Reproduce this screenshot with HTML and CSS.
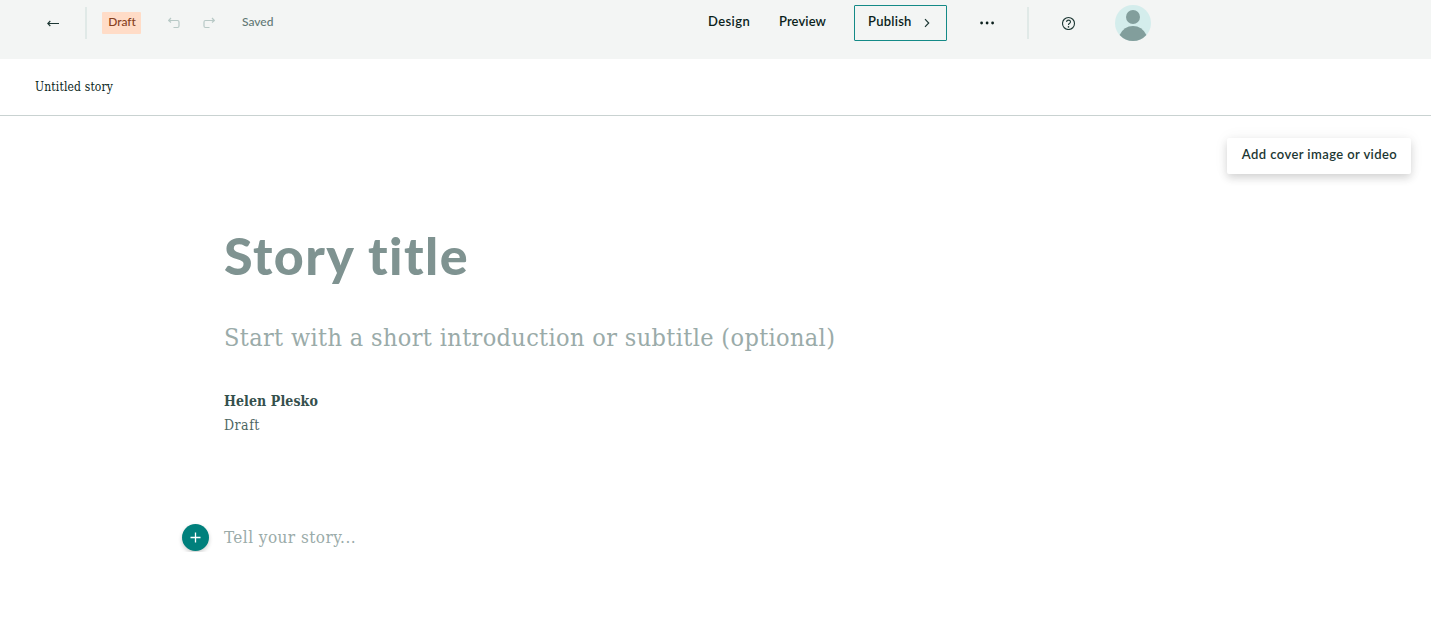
FILE: index.html
```html
<!DOCTYPE html>
<html lang="en">
<head>
<meta charset="utf-8">
<title>Untitled story</title>
<link rel="stylesheet" href="styles.css">
</head>
<body>
<header class="toolbar">
  <div class="toolbar-left">
    <svg class="icon back" width="12" height="8" viewBox="0 0 12 8"><path d="M.8 4.500H12M3.300 2 .8 4.500l2.500 2.500" fill="none" stroke="#1c3733" stroke-width="1.1"/></svg>
    <span class="divider"></span>
    <span class="badge">Draft</span>
    <svg class="icon undo" width="12" height="12" viewBox="0 0 12 12"><path d="M1 3.500h8.500q1.500 0 1.500 1.500v4q0 1.500-1.500 1.500H5.500M3 1 .7 3.500 3 5.500" fill="none" stroke="#b8c9c6" stroke-width="1.2"/></svg>
    <svg class="icon redo" width="12" height="12" viewBox="0 0 12 12"><path d="M11 3.500H2.500Q1 3.500 1 5v4q0 1.500 1.500 1.500h4M9 1l2.300 2.500L9 5.500" fill="none" stroke="#b8c9c6" stroke-width="1.2"/></svg>
    <span class="status">Saved</span>
  </div>
  <nav class="toolbar-right">
    <a class="link design">Design</a>
    <a class="link preview">Preview</a>
    <button class="publish"><span class="publish-label">Publish</span><svg class="icon" width="6" height="10" viewBox="0 0 6 10"><path d="m1 1.200 3.700 3.800L1 8.800" fill="none" stroke="#1c3733" stroke-width="1.2"/></svg></button>
    <svg class="icon more" width="14" height="4" viewBox="0 0 14 4"><g fill="#0b1f1c"><circle cx="1.600" cy="2" r="1.400"/><circle cx="7.100" cy="2" r="1.400"/><circle cx="12.600" cy="2" r="1.400"/></g></svg>
    <span class="divider"></span>
    <svg class="icon help" width="14" height="14" viewBox="0 0 14 14"><g fill="none" stroke="#1c3733" stroke-width="1.1"><circle cx="6.500" cy="7.500" r="6"/><path d="M4.600 6Q4.600 4.100 6.500 4.100T8.500 5.800Q8.500 6.800 7.300 7.500 6.500 8 6.500 9"/></g><circle cx="6.500" cy="10.900" r=".8" fill="#1c3733"/></svg>
    <svg class="icon avatar" width="36" height="36" viewBox="0 0 36 36"><circle cx="18" cy="18" r="18" fill="#d4edec"/><g fill="#829e9c"><circle cx="18" cy="12" r="7"/><path d="M4.600 30Q9 21 18 21t13.400 9A18 18 0 0 1 4.600 30Z"/></g></svg>
  </nav>
</header>
<div class="story-bar"><span class="story-name">Untitled story</span></div>
<main class="editor">
  <div class="cover-row"><button class="cover">Add cover image or video</button></div>
  <article class="story">
    <h1 class="title">Story title</h1>
    <p class="subtitle">Start with a short introduction or subtitle (optional)</p>
    <p class="author">Helen Plesko</p>
    <p class="state">Draft</p>
    <div class="body-row">
      <button class="add"><svg class="icon" width="11" height="11" viewBox="0 0 11 11"><path d="M5.500 .5v10M.5 5.500h10" stroke="#fff" stroke-width="1.3"/></svg></button>
      <p class="prompt">Tell your story...</p>
    </div>
  </article>
</main>
</body>
</html>
```
FILE: styles.css
```css
* { box-sizing: border-box; }
body { margin: 0; background: #fff; overflow: hidden; font-family: Lato, sans-serif; font-variant-ligatures: none; color: #0b1f1c; }
p, h1 { margin: 0; white-space: nowrap; }
button { padding: 0; border: 0; background: none; font: inherit; color: inherit; }
.icon { display: block; flex: none; }
.toolbar { display: flex; height: 59px; padding-top: 5px; align-items: flex-start; background: #f3f5f4; }
.toolbar-left, .toolbar-right { display: flex; height: 36px; align-items: center; flex: none; white-space: nowrap; }
.toolbar-left { width: 708px; padding-left: 47px; }
.divider { width: 2px; height: 32px; background: #e0e9e7; flex: none; }
.back { margin-right: 26px; }
.badge { width: 39px; height: 22px; margin: 0 27px 0 15px; padding-left: 1px; border-radius: 1px; background: #ffdcc7; color: #86401c; font-size: 12px; font-weight: 500; line-height: 20px; text-align: center; letter-spacing: -.1px; }
.redo { margin: 0 27px 0 23px; }
.status { color: #617875; font-size: 12px; font-weight: 500; line-height: 20px; padding-bottom: 2px; }
.link { font-size: 13px; font-weight: 600; letter-spacing: .1px; line-height: 20px; padding-bottom: 4px; }
.design { width: 71px; letter-spacing: .4px; }
.preview { width: 75px; }
.publish { display: flex; width: 93px; height: 36px; align-items: center; padding-left: 13px; border: 1px solid #148a87; border-radius: 1px; font-size: 13px; font-weight: 600; letter-spacing: .25px; }
.publish-label { width: 56px; padding-bottom: 4px; text-align: left; line-height: 20px; }
.more { margin: 0 33px; }
.help { margin: 0 39px 0 33px; }
.story-bar { height: 57px; padding: 18px 35px; border-bottom: 1px solid #c9d2d1; line-height: 20px; }
.story-name, .subtitle, .author, .state, .prompt { font-family: "DejaVu Serif Condensed", "DejaVu Serif", serif; font-stretch: condensed; }
.story-name { display: block; font-size: 12px; letter-spacing: .15px; }
.cover-row { display: flex; height: 106px; padding: 22px 20px 0; justify-content: flex-end; }
.cover { width: 184px; height: 36px; padding: 0 0 4px 1px; border-radius: 2px; background: #fff; box-shadow: 0 4px 8px rgba(0,0,0,.15), 0 0 16px rgba(0,0,0,.05); color: #1c3733; font-size: 13px; font-weight: 600; letter-spacing: .42px; white-space: nowrap; }
.story { padding-left: 224px; }
.title { height: 70px; color: #7f9391; font-size: 52px; font-weight: 900; letter-spacing: 1.45px; line-height: 66px; }
.subtitle { height: 40px; margin-top: 26px; color: #9aaba9; font-size: 25px; letter-spacing: .36px; line-height: 39px; }
.author { margin-top: 31px; color: #35504d; font-size: 14px; font-weight: 700; letter-spacing: .1px; line-height: 24px; }
.state { color: #4d6663; font-size: 14px; letter-spacing: .5px; line-height: 24px; }
.body-row { display: flex; align-items: center; height: 30px; margin: 85px 0 0 -42px; }
.add { display: grid; width: 27px; height: 27px; margin-right: 15px; place-items: center; border-radius: 50%; background: #00807c; box-shadow: 0 2px 4px rgba(0,0,0,.2); }
.prompt { color: #9aaba9; font-size: 17px; letter-spacing: .45px; line-height: 30px; }
```
